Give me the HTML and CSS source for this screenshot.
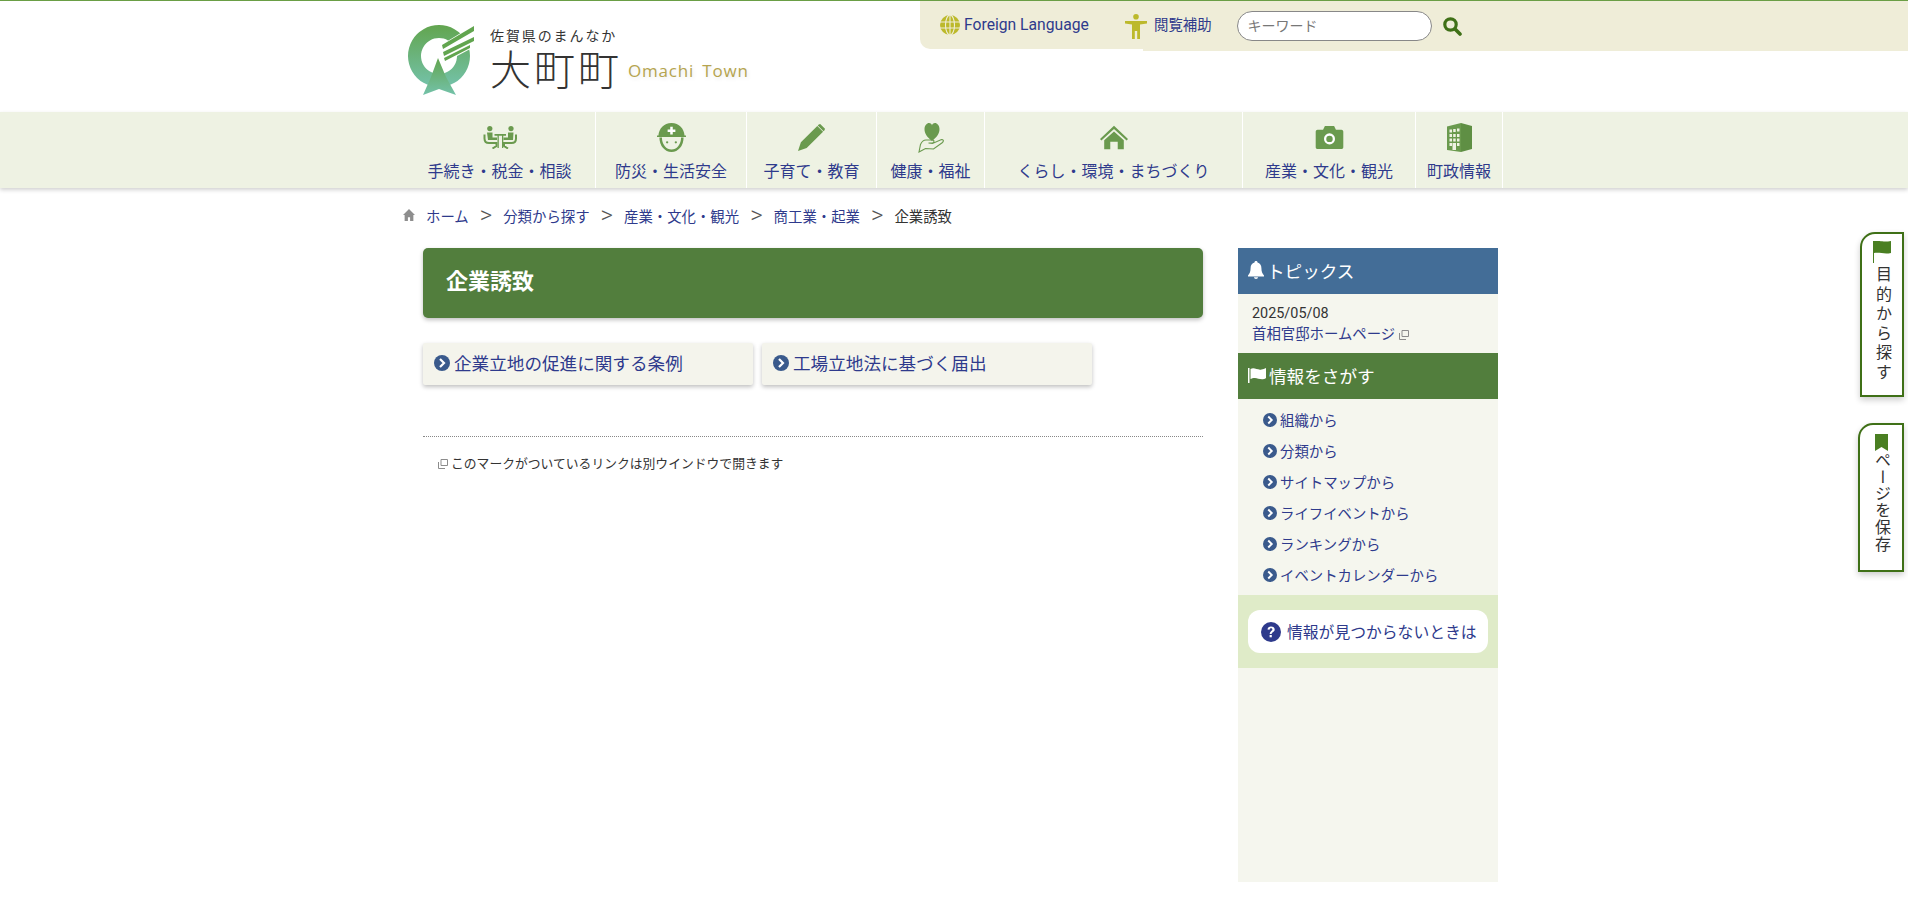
FILE: index.html
```html
<!DOCTYPE html>
<html lang="ja">
<head>
    <meta charset="UTF-8">
    <title>企業誘致 | 大町町</title>
    <link rel="stylesheet" href="styles.css">
</head>
<body>

<svg class="sprite" aria-hidden="true">
    <symbol id="i-chevron" viewBox="0 0 16 16">
        <circle cx="8" cy="8" r="8"/>
        <path d="M6 4l4 4-4 4" fill="none" stroke="#fff" stroke-width="2.2"/>
    </symbol>
    <symbol id="i-ext" viewBox="0 0 10 10">
        <path d="M3 .5h6.500v6H3zM.5 3v6.500h6.500" fill="none" stroke="#8c8c8c" stroke-width="1"/>
    </symbol>
</svg>

<header class="site-header">
    <a class="logo" href="#">
        <svg class="logo-mark" viewBox="0 0 66 70" width="66" height="70">
            <defs>
                <linearGradient id="logoGrad" x1="0" y1="0" x2="0" y2="1">
                    <stop offset="0" stop-color="#62a54f"/>
                    <stop offset="1" stop-color="#74c2aa"/>
                </linearGradient>
            </defs>
            <path fill="url(#logoGrad)" fill-rule="evenodd" d="M31 0a31 31 0 1 1-.01 0zM31 13a18 18 0 1 0 .01 0z"/>
            <path fill="url(#logoGrad)" d="M30 33l8 19 10 18-17-6-16 6 8-18z"/>
            <path fill="#fff" d="M33 20L66 0v22L36 38z"/>
            <path fill="#62a54f" d="M34 20L66 1v5L35 24zM35 27l31-15v4L36 31zM36 33l26-13 0 3-25 13z"/>
        </svg>
        <div class="logo-text">
            <span class="logo-sub">佐賀県のまんなか</span>
            <span class="logo-main">大町町<small>Omachi Town</small></span>
        </div>
    </a>
    <div class="tools">
        <div class="tools-lang">
            <a href="#" class="tool-link">
                <svg width="20" height="20" viewBox="0 0 20 20" fill="none" stroke="#efedd8" stroke-width="1.100">
                    <circle cx="10" cy="10" r="10" fill="#bcb92b" stroke="none"/>
                    <ellipse cx="10" cy="10" rx="4.500" ry="10"/>
                    <path d="M10 0v20M0 7h20M0 13h20"/>
                </svg>
                Foreign Language
            </a>
        </div>
        <div class="tools-rest">
            <a href="#" class="tool-link tool-assist">
                <svg width="22" height="25" viewBox="0 0 22 25" fill="#bcb92b">
                    <circle cx="11" cy="2.800" r="2.800"/>
                    <path d="M0 7h22v2.400l-7 1V25h-2.800V17H9.800v8H7V10.400L0 9.400z"/>
                </svg>
                閲覧補助
            </a>
            <input class="search-input" type="text" placeholder="キーワード">
            <svg class="search-icon" width="19" height="19" viewBox="0 0 19 19" fill="none" stroke="#3f7017">
                <circle cx="7.500" cy="7.500" r="5.700" stroke-width="3.200"/>
                <path d="M12 12l5 5" stroke-width="3.600" stroke-linecap="round"/>
            </svg>
        </div>
    </div>
</header>

<nav class="global-nav">
    <a href="#">
        <svg width="34" height="23" viewBox="0 0 34 23" fill="#6a9a4e">
            <circle cx="6.800" cy="2.600" r="2.600"/><circle cx="28" cy="2.600" r="2.600"/>
            <path d="M4 6.500h5.500v5H14V14H5zM30.500 6.500H25v5h-4.500V14h9.500z"/>
            <path d="M11.500 8h11.500v1.800H11.500zM14.500 9.800h1.300V22h-1.300zM19 9.800h1.300V22H19z"/>
            <path fill="none" stroke="#6a9a4e" stroke-width="2" d="M1.500 8.500v4c0 3.500 2 4.500 4.500 4.500h7.500v3l-4 2.500M33 8.500v4c0 3.500-2 4.500-4.500 4.500H21v3l4 2.500"/>
        </svg>
        <span>手続き・税金・相談</span>
    </a>
    <a href="#">
        <svg width="29" height="29" viewBox="0 0 30 30">
            <path fill="#6a9a4e" d="M15 0C7 0 2 6 1.500 13H0v1.500h30V13h-1.500C28 6 23 0 15 0z"/>
            <path fill="#fff" d="M13.700 4h2.600v2.700H19v2.600h-2.700V12h-2.600V9.300H11V6.700h2.700z"/>
            <path fill="none" stroke="#6a9a4e" stroke-width="2.600" d="M3.800 15c0 8 5 13.700 11.200 13.700S26.200 23 26.200 15"/>
            <circle cx="10.500" cy="20" r="1.200" fill="#6a9a4e"/><circle cx="19.500" cy="20" r="1.200" fill="#6a9a4e"/>
        </svg>
        <span>防災・生活安全</span>
    </a>
    <a href="#">
        <svg width="27" height="27" viewBox="0 0 28 28" fill="#6a9a4e">
            <path d="M0 28l3-9L20 2l6 6L9 25zM21.500.5l1.500-.5 5 5-.5 1.500-1 1-6-6z"/>
        </svg>
        <span>子育て・教育</span>
    </a>
    <a href="#">
        <svg width="26" height="30" viewBox="0 0 26 30">
            <path fill="#6a9a4e" d="M14 18C9 14 6.500 10.500 6.500 6c0-3.500 2.500-6 4.500-6 1.500 0 3 1 3 2.500C14 1 15.500 0 17 0c2 0 4.500 2.500 4.500 6 0 4.500-2.500 8-7.500 12z"/>
            <path fill="none" stroke="#6a9a4e" stroke-width="1.100" d="M1 29l1.500-7.500C4 18 6 17 8 17h6.500c2 0 2 3-.5 3H10.500l4 .5 9-4c2 0 2.500 1.500 1 3l-9 6.500-8-.500z"/>
        </svg>
        <span>健康・福祉</span>
    </a>
    <a href="#">
        <svg width="28" height="25" viewBox="0 0 30 25" fill="#6a9a4e">
            <path d="M15 0L0 14l1.500 1.800L15 3.500l13.500 12.300L30 14z"/>
            <path d="M15 6L4.500 15.500V25H11v-8h8v8h6.500v-9.500z"/>
        </svg>
        <span>くらし・環境・まちづくり</span>
    </a>
    <a href="#">
        <svg width="29" height="23" viewBox="0 0 30 25">
            <path fill="#6a9a4e" d="M2 4h6l2-4h10l2 4h6c1 0 2 1 2 2v17c0 1-1 2-2 2H2c-1 0-2-1-2-2V6c0-1 1-2 2-2z"/>
            <circle cx="15" cy="14" r="6" fill="#fff"/><circle cx="15" cy="14" r="3.500" fill="#6a9a4e"/>
        </svg>
        <span>産業・文化・観光</span>
    </a>
    <a href="#">
        <svg width="25" height="29" viewBox="0 0 25 29">
            <path fill="#6a9a4e" d="M0 3.500L14 0v29L0 27z"/>
            <path fill="#5f8f44" d="M14 0l11 3v23l-11 3z"/>
            <path fill="#eef2e3" d="M2.500 6.500h2.500v3H2.500zM6.200 6h2.500v3H6.200zM10 5.500h2.500v3H10zM2.500 11h2.500v3H2.500zM6.200 11h2.500v3H6.200zM10 11h2.500v3H10zM2.500 15.500h2.500v3H2.500zM6.200 15.500h2.500v3H6.200zM10 15.500h2.500v3H10zM2.500 20h2.500v3H2.500zM10 20h2.500v3H10zM5.500 20h3.500v7H5.500z"/>
        </svg>
        <span>町政情報</span>
    </a>
</nav>

<ol class="breadcrumb">
    <li>
        <svg class="home-icon" width="12" height="12" viewBox="0 0 11 11" fill="#8e8e8e"><path d="M5.500 0L0 5.500h1.500V11h3V7.500h2V11h3V5.500H11z"/></svg>
        <a href="#">ホーム</a>
    </li>
    <li><a href="#">分類から探す</a></li>
    <li><a href="#">産業・文化・観光</a></li>
    <li><a href="#">商工業・起業</a></li>
    <li>企業誘致</li>
</ol>

<div class="content">
    <main class="main">
        <h1 class="page-title">企業誘致</h1>
        <ul class="link-cards">
            <li><a href="#"><svg class="chev"><use href="#i-chevron"/></svg>企業立地の促進に関する条例</a></li>
            <li><a href="#"><svg class="chev"><use href="#i-chevron"/></svg>工場立地法に基づく届出</a></li>
        </ul>
        <p class="ext-note"><svg class="ext"><use href="#i-ext"/></svg>このマークがついているリンクは別ウインドウで開きます</p>
    </main>

    <aside class="side">
        <h2 class="side-head head-blue">
            <svg width="16" height="18" viewBox="0 0 16 18" fill="#fff"><path d="M8 0c1 0 1.500.6 1.500 1.400C12 2 13.400 4 13.400 7c0 4 1 5.500 2.600 7.500v1H0v-1C1.600 12.500 2.600 11 2.600 7c0-3 1.400-5 3.900-5.600C6.500.6 7 0 8 0zM6 16.300h4C10 17.300 9 18 8 18s-2-.7-2-1.700z"/></svg>
            トピックス
        </h2>
        <div class="topics">
            <div>2025/05/08</div>
            <a href="#">首相官邸ホームページ<svg class="ext"><use href="#i-ext"/></svg></a>
        </div>
        <h2 class="side-head head-green">
            <svg width="18" height="15" viewBox="0 0 18 15" fill="#fff"><path d="M0 0h1.500v15H0zM2.500 1c4-2 7 1.500 11 .5 1.500-.3 3-.7 4.500-1.500v10c-4 3-8 0-11 0-2 0-3.500.5-4.500 1z"/></svg>
            情報をさがす
        </h2>
        <ul class="search-list">
            <li><a href="#"><svg class="chev-sm"><use href="#i-chevron"/></svg>組織から</a></li>
            <li><a href="#"><svg class="chev-sm"><use href="#i-chevron"/></svg>分類から</a></li>
            <li><a href="#"><svg class="chev-sm"><use href="#i-chevron"/></svg>サイトマップから</a></li>
            <li><a href="#"><svg class="chev-sm"><use href="#i-chevron"/></svg>ライフイベントから</a></li>
            <li><a href="#"><svg class="chev-sm"><use href="#i-chevron"/></svg>ランキングから</a></li>
            <li><a href="#"><svg class="chev-sm"><use href="#i-chevron"/></svg>イベントカレンダーから</a></li>
        </ul>
        <div class="help-box">
            <a href="#">
                <svg width="20" height="20" viewBox="0 0 20 20">
                    <circle cx="10" cy="10" r="10" fill="#2e3a8c"/>
                    <path d="M6.500 7.500C6.700 5.500 8 4.500 10 4.500c2.200 0 3.700 1.200 3.700 3 0 2.700-3 2.500-3 4.500H8.700c0-3 2.700-3 2.700-4.400 0-.8-.6-1.300-1.400-1.300-.9 0-1.300.6-1.500 1.500z" fill="#fff"/>
                    <rect x="8.600" y="13" width="2.200" height="2.300" fill="#fff"/>
                </svg>
                情報が見つからないときは
            </a>
        </div>
    </aside>
</div>

<a class="side-tab tab-purpose" href="#">
    <svg width="18" height="22" viewBox="0 0 18 22" fill="#4a7f22"><path d="M0 0h1v22H0zM1 0c5-1 8 1.500 17 0v12c-7 1.500-11-1-17 0z"/></svg>
    <span>目的から探す</span>
</a>
<a class="side-tab tab-save" href="#">
    <svg width="13" height="17" viewBox="0 0 13 17" fill="#4a7f22"><path d="M0 0h13v17l-6.500-4L0 17z"/></svg>
    <span>ページを保存</span>
</a>

</body>
</html>
```

FILE: styles.css
```css
* { box-sizing: border-box; }

body {
    margin: 0;
    font-family: Roboto, "Noto Sans CJK JP", sans-serif;
    font-size: 14px;
    color: #333;
    background: #fff;
    border-top: 1px solid #6a9e45;
}
a { color: #2e3a8c; text-decoration: none; }
ul, ol { list-style: none; margin: 0; padding: 0; }
.sprite { display: none; }

/* header */
.site-header {
    display: flex;
    height: 111px;
    padding-left: 408px;
}
.logo {
    display: flex;
    width: 512px;
    padding-top: 24px;
    color: #333;
}
.logo-mark { flex: none; }
.logo-text {
    display: flex;
    flex-direction: column;
    margin-left: 16px;
}
.logo-sub {
    font-size: 14px;
    line-height: 20px;
    margin-top: 1px;
    letter-spacing: 1.900px;
}
.logo-main {
    display: flex;
    align-items: center;
    font-size: 41px;
    font-weight: 300;
    line-height: 50px;
    letter-spacing: 3px;
    white-space: nowrap;
}
.logo-main small {
    margin-left: 6px;
    font-size: 17px;
    font-weight: 400;
    font-family: "Open Sans", sans-serif;
    letter-spacing: .8px;
    word-spacing: 3px;
    color: #b5a44f;
    text-shadow: 1px 2px 4px rgba(0,0,0,.1);
}

.tools { flex: 1; display: flex; align-items: flex-start; }
.tools-lang {
    width: 223px;
    height: 48px;
    padding: 14px 0 0 20px;
    background: #efedd8;
    border-bottom-left-radius: 10px;
}
.tools-rest {
    flex: 1;
    display: flex;
    align-items: center;
    height: 50px;
    background: #efedd8;
}
.tool-link {
    display: flex;
    align-items: center;
    gap: 4px;
    font-size: 15.700px;
    line-height: 20px;
}
.tool-assist { gap: 7px; font-size: 14.400px; margin-left: -18px; }
.search-input {
    width: 195px;
    height: 30px;
    margin-left: 25px;
    padding: 0 10px;
    border: 1px solid #888;
    border-radius: 15px;
    background: #fff;
    font-family: inherit;
    font-size: 14px;
}
.search-input::placeholder { color: #777; }
.search-icon { margin-left: 11px; }

/* global nav */
.global-nav {
    display: grid;
    grid-template-columns: 192px 151px 130px 108px 258px 173px 87px 1fr;
    height: 76px;
    padding-left: 404px;
    background: #eef2e3;
    box-shadow: 0 2px 4px rgba(0,0,0,.18);
}
.global-nav a {
    display: grid;
    grid-template-rows: 31px 24px;
    row-gap: 7px;
    justify-items: center;
    align-items: center;
    padding-top: 10px;
    border-right: 1px solid #fff;
    font-size: 16px;
    line-height: 24px;
    white-space: nowrap;
}

/* breadcrumb */
.breadcrumb {
    display: flex;
    align-items: center;
    height: 60px;
    padding: 0 0 6px 403px;
    font-size: 14.400px;
}
.breadcrumb li { display: flex; align-items: center; }
.home-icon { margin-right: 11px; }
.breadcrumb li + li::before {
    content: ">";
    margin: 0 11px;
    color: #555;
    font-size: 24px;
    font-weight: 300;
    line-height: 24px;
}

/* main */
.content {
    display: flex;
    gap: 35px;
    padding-left: 423px;
}
.main { width: 780px; }
.page-title {
    margin: 0;
    height: 70px;
    padding-left: 23px;
    background: #527e3d;
    border-radius: 5px;
    box-shadow: 0 2px 4px rgba(0,0,0,.25);
    color: #fff;
    font-size: 22px;
    font-weight: 700;
    line-height: 68px;
}
.link-cards {
    display: flex;
    gap: 9px;
    margin-top: 25px;
}
.link-cards li { width: 330px; }
.link-cards a {
    display: flex;
    align-items: center;
    height: 42px;
    padding: 0 0 3px 11px;
    background: #f4f4ec;
    box-shadow: 0 2px 4px rgba(0,0,0,.25);
    border-radius: 2px;
    font-size: 17.600px;
}
.chev {
    width: 16px;
    height: 16px;
    margin-right: 4px;
    fill: #3a5a8c;
    flex: none;
}
.ext-note {
    margin: 51px 0 0;
    padding: 18px 0 0 15px;
    border-top: 1px dotted #888;
    font-size: 12.800px;
    line-height: 18px;
}
.ext {
    display: inline-block;
    width: 10px;
    height: 10px;
    margin: 0 3px 0 0;
    vertical-align: -1px;
}

/* side column */
.side {
    width: 260px;
    height: 634px;
    background: #f5f6ee;
}
.side-head {
    display: flex;
    align-items: center;
    gap: 3px;
    margin: 0;
    height: 46px;
    padding: 0 0 2px 10px;
    color: #fff;
    font-size: 17.600px;
    font-weight: 400;
}
.head-blue { background: #436d97; }
.head-green { background: #527e3d; }
.topics {
    height: 59px;
    padding: 9px 14px 0;
    font-size: 14.400px;
    line-height: 21px;
}
.topics .ext { margin: 0 0 0 4px; }
.search-list { padding: 5px 0 5px 25px; }
.search-list li { height: 31px; }
.search-list a {
    display: flex;
    align-items: center;
    height: 31px;
    font-size: 14.400px;
}
.chev-sm {
    width: 14px;
    height: 14px;
    margin-right: 3px;
    fill: #3a5a8c;
    flex: none;
}
.help-box {
    height: 73px;
    padding: 15px 10px;
    background: #dfebc8;
}
.help-box a {
    display: flex;
    align-items: center;
    gap: 6px;
    height: 43px;
    padding-left: 13px;
    background: #fff;
    border-radius: 12px;
    font-size: 15.800px;
}

/* side tabs over the page */
.side-tab {
    position: absolute;
    right: 4px;
    display: flex;
    flex-direction: column;
    align-items: center;
    background: #fff;
    border: 2px solid #3f7017;
    border-top-left-radius: 15px;
    box-shadow: 0 3px 6px rgba(0,0,0,.2);
    color: #333;
    font-size: 16px;
}
.side-tab span { writing-mode: vertical-rl; }
.tab-purpose {
    top: 232px;
    width: 44px;
    height: 165px;
    padding-top: 7px;
}
.tab-purpose span { letter-spacing: 3.600px; margin-top: 3px; }
.tab-save {
    top: 423px;
    width: 46px;
    height: 149px;
    padding-top: 9px;
}
.tab-save span { letter-spacing: .7px; margin-top: 1px; }
```
